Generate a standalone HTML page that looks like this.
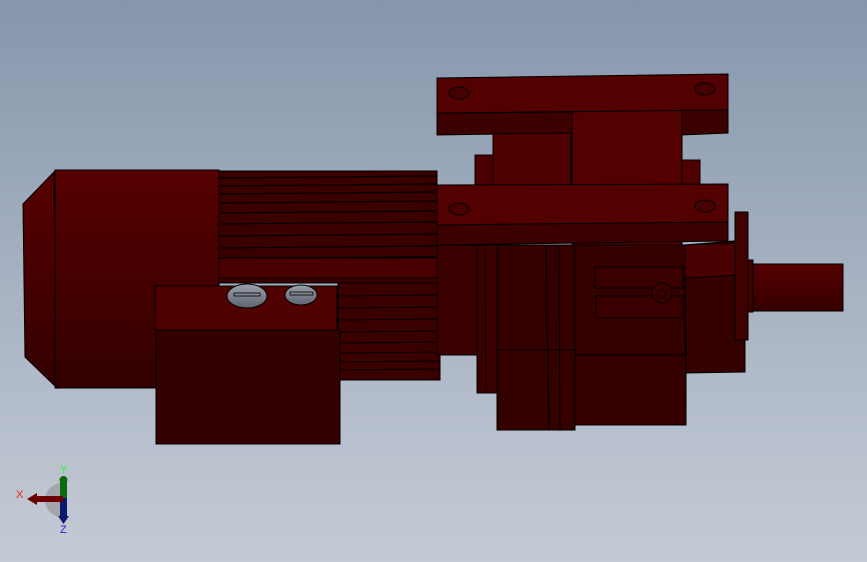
<!DOCTYPE html>
<html><head><meta charset="utf-8"><style>
html,body{margin:0;padding:0;width:867px;height:562px;overflow:hidden}
body{background:linear-gradient(#8696ab 0%,#a3afc0 45%,#c5cbd5 100%)}
svg{position:absolute;left:0;top:0}
</style></head><body>
<svg width="867" height="562" viewBox="0 0 867 562" xmlns="http://www.w3.org/2000/svg">
<defs>
<linearGradient id="mot" x1="0" y1="0" x2="0" y2="1"><stop offset="0" stop-color="#560000"/><stop offset="1" stop-color="#330000"/></linearGradient>
<linearGradient id="sh" x1="0" y1="0" x2="0" y2="1"><stop offset="0" stop-color="#560000"/><stop offset="1" stop-color="#350000"/></linearGradient>
<linearGradient id="scr" x1="0" y1="0" x2="0" y2="1"><stop offset="0" stop-color="#9aa0ab"/><stop offset="1" stop-color="#5f6570"/></linearGradient>
</defs>
<g stroke="#000" stroke-width="1">
<!-- fan cover -->
<polygon points="23,204 54,172 57,388 25,357" fill="url(#mot)"/>
<rect x="55" y="170" width="164" height="218" fill="url(#mot)"/>
<!-- fins upper -->
<rect x="219" y="171" width="218" height="112" fill="#3a0000"/>
<g stroke-width="1.2">
<line x1="219" y1="178" x2="437" y2="176"/><line x1="219" y1="186" x2="437" y2="184"/><line x1="219" y1="194" x2="437" y2="192"/><line x1="219" y1="203" x2="437" y2="201"/><line x1="219" y1="213" x2="437" y2="211"/><line x1="219" y1="224" x2="437" y2="222"/><line x1="219" y1="236" x2="437" y2="234"/><line x1="219" y1="248" x2="437" y2="246"/><line x1="219" y1="258" x2="437" y2="257"/>
</g>
<rect x="219" y="258" width="218" height="20" fill="#4a0000"/>
<!-- fins lower right -->
<rect x="338" y="283" width="102" height="97" fill="#3a0000"/>
<line x1="338" y1="296" x2="440" y2="295"/><line x1="338" y1="308" x2="440" y2="307"/><line x1="338" y1="320" x2="440" y2="319"/><line x1="338" y1="332" x2="440" y2="331"/><line x1="338" y1="343" x2="440" y2="342"/><line x1="338" y1="353" x2="440" y2="352"/><line x1="338" y1="362" x2="440" y2="361"/><line x1="338" y1="370" x2="440" y2="369"/>
<!-- terminal box -->
<rect x="155" y="286" width="182" height="44" fill="#4f0000"/>
<rect x="156" y="330" width="184" height="114" fill="#330000"/>
<ellipse cx="247" cy="296" rx="20" ry="12" fill="url(#scr)"/>
<rect x="234" y="293" width="26" height="3" fill="none" stroke-width="0.8"/>
<ellipse cx="301" cy="295" rx="16" ry="10" fill="url(#scr)"/>
<rect x="290" y="292" width="23" height="3" fill="none" stroke-width="0.8"/>
<!-- gearbox body -->
<rect x="437" y="245" width="42" height="110" fill="#3a0000"/>
<rect x="477" y="245" width="20" height="148" fill="#3a0000"/>
<line x1="485" y1="250" x2="486" y2="390"/>
<rect x="497" y="245" width="78" height="105" fill="#350000"/>
<rect x="497" y="350" width="78" height="80" fill="#350000"/>
<line x1="546" y1="245" x2="549" y2="430"/><line x1="559" y1="245" x2="560" y2="430"/>
<rect x="575" y="245" width="110" height="110" fill="#350000"/>
<rect x="575" y="355" width="111" height="70" fill="#350000"/>
<rect x="595" y="267" width="88" height="21" fill="#3a0000"/>
<rect x="596" y="296" width="87" height="22" fill="#3a0000"/>
<circle cx="662" cy="293" r="10" fill="#3a0000"/>
<circle cx="662" cy="294" r="4" fill="none" stroke-width="0.7"/>
<polygon points="685,245 745,240 745,372 686,373" fill="#350000"/>
<polygon points="685,245 740,243 740,275 685,278" fill="#4a0000"/>
<rect x="735" y="212" width="13" height="128" fill="#3f0000"/>
<rect x="748" y="260" width="5" height="52" fill="#3f0000"/>
<rect x="753" y="264" width="90" height="47" fill="url(#sh)"/>
<!-- flanges -->
<rect x="475" y="155" width="20" height="33" fill="#4a0000"/>
<rect x="493" y="133" width="78" height="54" fill="#4f0000"/>
<rect x="682" y="160" width="18" height="26" fill="#4f0000"/>
<rect x="572" y="110" width="110" height="135" fill="#520000"/>
<polygon points="437,78 728,74 728,110 437,113" fill="#520000"/>
<polygon points="437,113 572,112 572,133 437,135" fill="#3d0000"/>
<polygon points="682,110 728,110 728,133 682,135" fill="#3d0000"/>
<ellipse cx="459" cy="93" rx="10" ry="6" fill="#450000"/>
<ellipse cx="705" cy="89" rx="10" ry="6" fill="#450000"/>
<polygon points="437,185 728,184 728,222 437,225" fill="#520000"/>
<polygon points="437,225 728,222 728,241 437,245" fill="#3d0000"/>
<ellipse cx="459" cy="209" rx="10" ry="6" fill="#450000"/>
<ellipse cx="705" cy="206" rx="10" ry="6" fill="#450000"/>
</g>
<!-- triad -->
<path d="M62,483 A17,17 0 0 0 62,517 Z" fill="#a4a6ab"/>
<rect x="60" y="478" width="7" height="20" fill="#0d6b0d"/>
<circle cx="63.5" cy="480" r="4" fill="#0d6b0d"/>
<rect x="60" y="498" width="7" height="20" fill="#0a1870"/>
<polygon points="58,516 69,516 63.5,524" fill="#0a1870"/>
<rect x="36" y="496" width="27" height="6" fill="#6b0000"/>
<polygon points="37,493 37,505 27,499" fill="#6b0000"/>
<text x="60" y="473" font-family="Liberation Sans,sans-serif" font-size="11" fill="#2f2">Y</text>
<text x="16" y="498" font-family="Liberation Sans,sans-serif" font-size="11" fill="#e22">X</text>
<text x="60" y="533" font-family="Liberation Sans,sans-serif" font-size="11" fill="#22c">Z</text>
</svg>
</body></html>
